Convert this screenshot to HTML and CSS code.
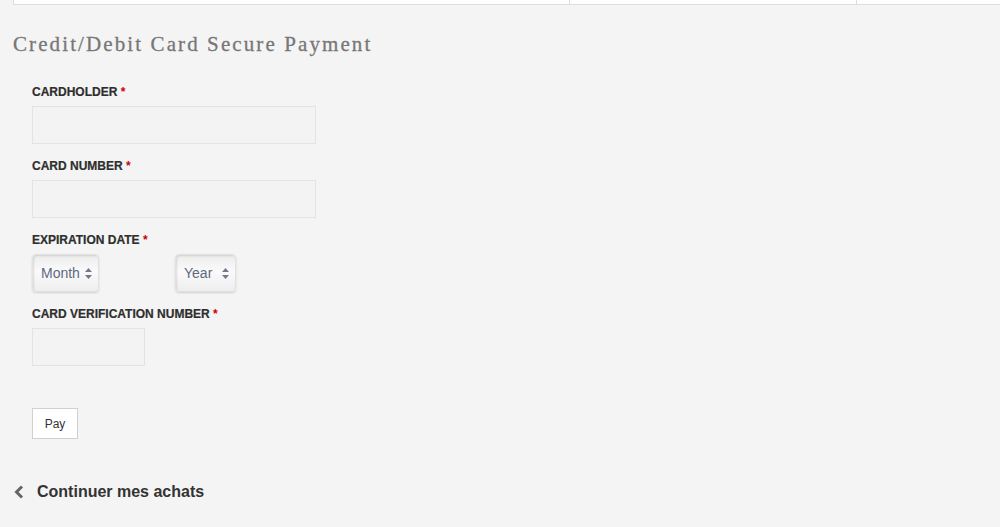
FILE: index.html
```html
<!DOCTYPE html>
<html>
<head>
	<meta charset="utf-8">
	<title>Credit/Debit Card Secure Payment</title>
	<link rel="stylesheet" href="styles.css">
</head>
<body>
	<div class="cart_table">
		<div class="cell cell_1"></div>
		<div class="cell cell_2"></div>
		<div class="cell cell_3"></div>
	</div>

	<h2 class="title">Credit/Debit Card Secure Payment</h2>

	<form class="payment">
		<div class="field">
			<label>CARDHOLDER <span class="req">*</span></label>
			<input type="text" class="text_input wide">
		</div>
		<div class="field">
			<label>CARD NUMBER <span class="req">*</span></label>
			<input type="text" class="text_input wide">
		</div>
		<div class="field">
			<label>EXPIRATION DATE <span class="req">*</span></label>
			<div class="date_row">
				<select class="month">
					<option>Month</option>
				</select>
				<select class="year">
					<option>Year</option>
				</select>
			</div>
		</div>
		<div class="field">
			<label>CARD VERIFICATION NUMBER <span class="req">*</span></label>
			<input type="text" class="text_input short">
		</div>
		<div class="actions">
			<button type="button" class="pay">Pay</button>
		</div>
	</form>

	<a class="back" href="#">
		<svg width="12" height="16" viewBox="0 0 12 16"><path d="M9 2.5 L3.5 8 L9 13.5" fill="none" stroke="#666" stroke-width="3"/></svg>
		<span>Continuer mes achats</span>
	</a>
</body>
</html>
```

FILE: styles.css
```css
* {
	margin: 0;
	padding: 0;
	box-sizing: border-box;
}
body {
	background-color: #f4f4f4;
	font-family: "Liberation Sans", Arial, sans-serif;
	color: #333;
}
.cart_table {
	display: flex;
	margin-left: 13px;
	height: 5px;
	border-left: 1px solid #ddd;
	border-bottom: 1px solid #ddd;
	background-color: #fff;
}
.cell_1 {
	width: 556px;
	border-right: 1px solid #ddd;
}
.cell_2 {
	width: 287px;
	border-right: 1px solid #ddd;
}
.cell_3 {
	flex: 1;
}
.title {
	margin: 24px 0 0 13px;
	font-family: "Liberation Serif", "Times New Roman", serif;
	font-weight: normal;
	font-size: 21px;
	letter-spacing: 2.1px;
	line-height: 30px;
	color: #777;
	-webkit-text-stroke: 0.3px #777;
}
.payment {
	padding: 25px 0 0 32px;
}
.field {
	margin-bottom: 14px;
}
label {
	display: block;
	font-size: 12px;
	font-weight: bold;
	line-height: 16px;
	margin-bottom: 6px;
	color: #2e2e2e;
	-webkit-text-stroke: 0.2px #2e2e2e;
}
.req {
	color: #c00;
	-webkit-text-stroke: 0;
}
.text_input {
	display: block;
	height: 38px;
	border: 1px solid #e3e3e3;
	background-color: #f3f3f3;
	outline: none;
}
.wide {
	width: 284px;
}
.short {
	width: 113px;
}
.date_row {
	display: flex;
	gap: 76px;
}
select {
	appearance: none;
	-webkit-appearance: none;
	height: 38px;
	padding: 0 0 0 8px;
	font-family: "Liberation Sans", Arial, sans-serif;
	font-size: 14px;
	color: #5d6880;
	border: 1px solid #e2e2e2;
	border-radius: 4px;
	background: url("data:image/svg+xml;utf8,<svg xmlns='http://www.w3.org/2000/svg' width='7' height='11'><path d='M3.5 0 L7 4 L0 4 Z M0 7 L7 7 L3.5 11 Z' fill='%23707a8a'/></svg>") no-repeat right 6px center, linear-gradient(#ececec, #fafafa 45%, #eeeeee);
	box-shadow: inset 1px 1px 2px rgba(0,0,0,0.12), 0 1px 2px rgba(0,0,0,0.15);
}
.month {
	width: 67px;
}
.year {
	width: 61px;
}
.actions {
	padding-top: 28px;
}
.pay {
	width: 46px;
	height: 31px;
	background-color: #fff;
	border: 1px solid #d0d0d0;
	font-family: "Liberation Sans", Arial, sans-serif;
	font-size: 12px;
	color: #333;
}
.back {
	display: flex;
	align-items: center;
	gap: 12px;
	margin: 44px 0 0 13px;
	text-decoration: none;
	font-size: 16px;
	font-weight: bold;
	color: #333;
}
```
